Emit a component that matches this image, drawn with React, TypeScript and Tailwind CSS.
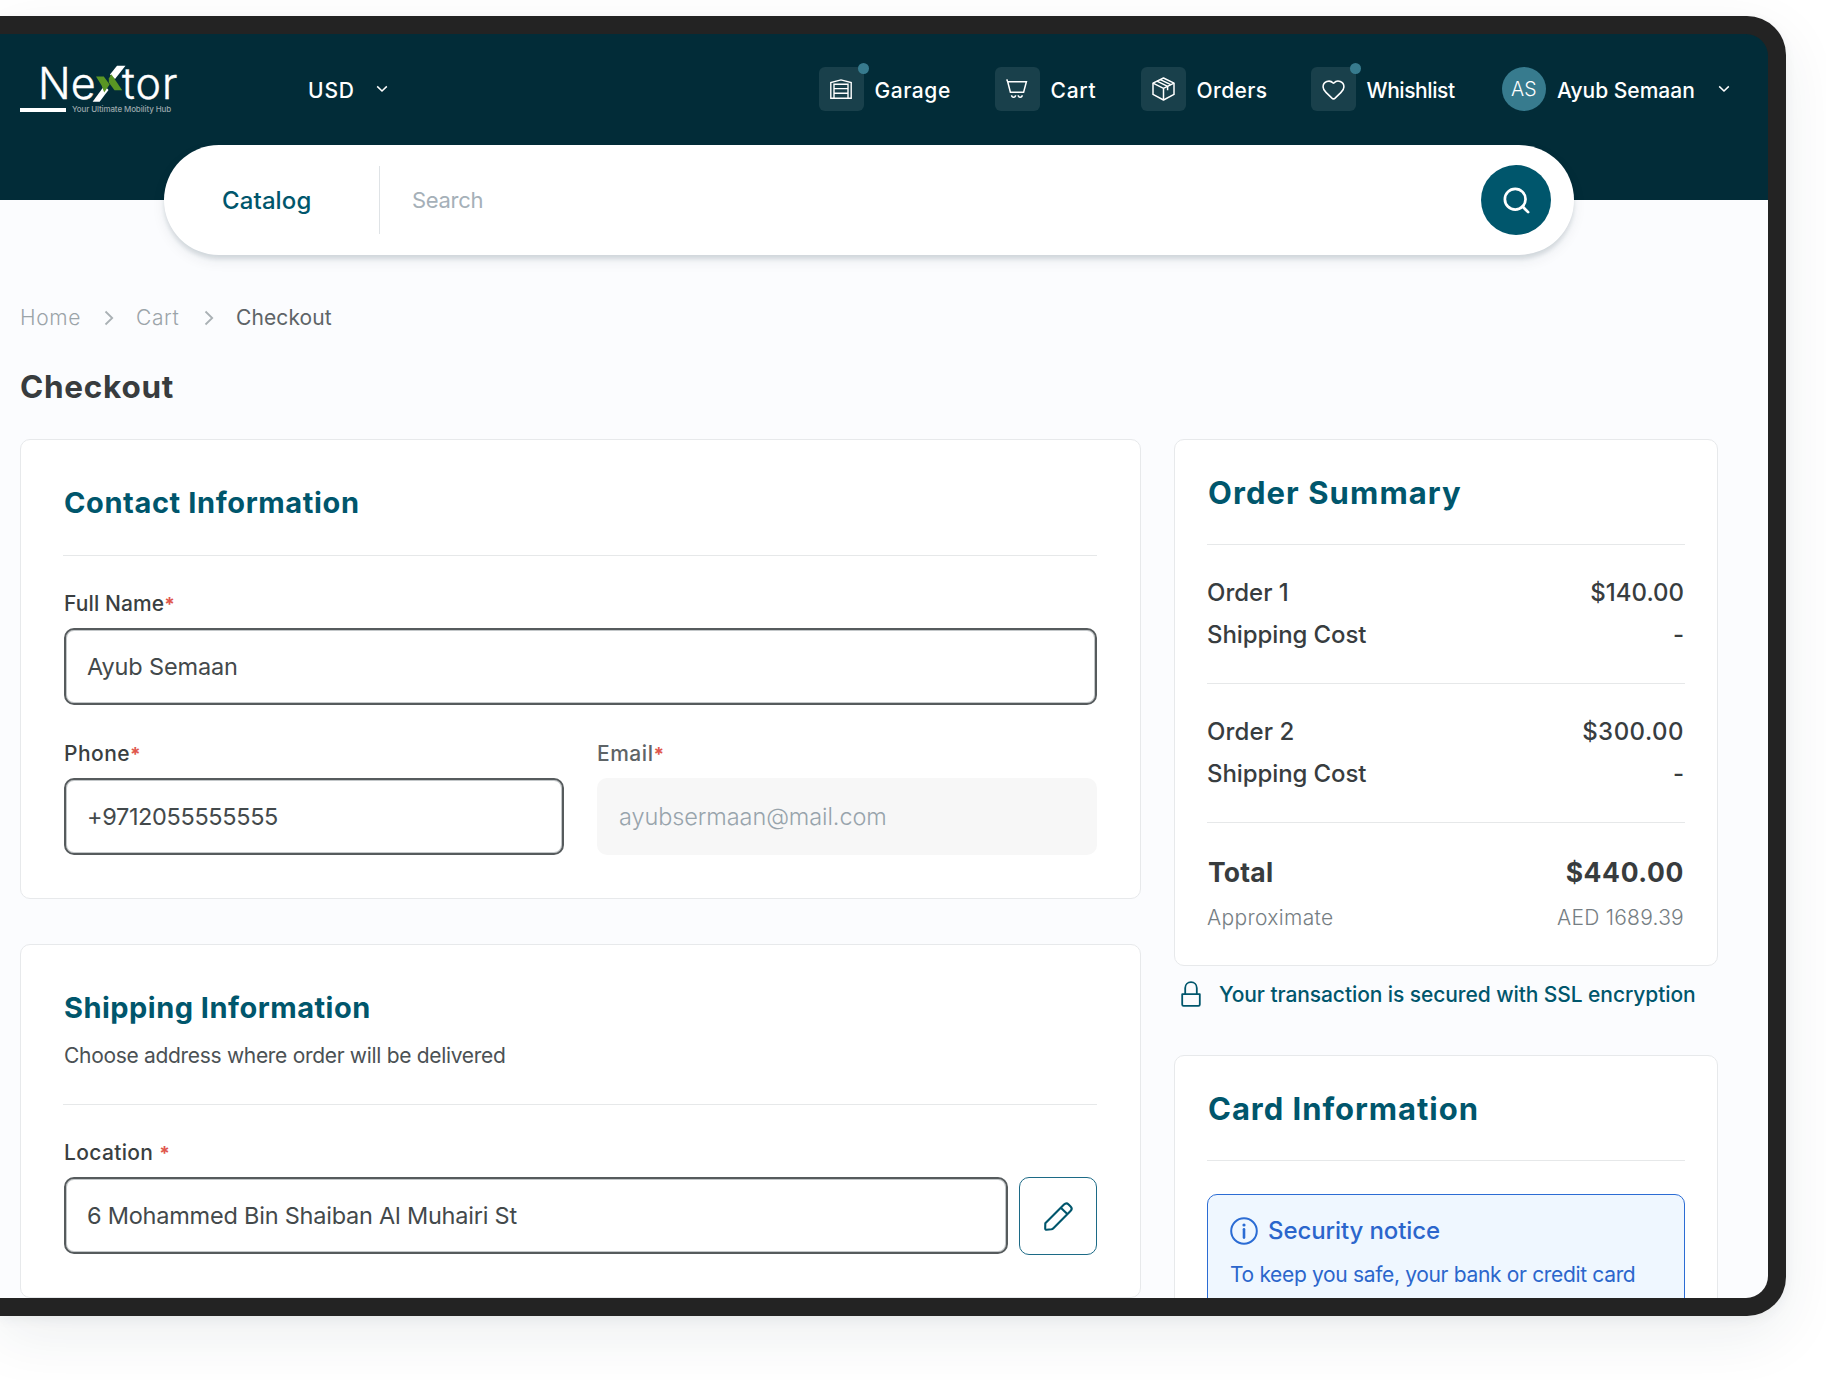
import React from "react";
import { Heart, Search } from "lucide-react";

function Logo() {
  return (
    <div className="relative h-[64px] w-[170px] text-white" role="img" aria-label="Nextor">
      <span className="absolute left-[18px] top-[4px] text-[43px] leading-10 font-light [-webkit-text-stroke:0.4px_white]">Ne</span>
      <span className="absolute left-[102px] top-[4px] text-[43px] leading-10 font-light tracking-[0.024em] [-webkit-text-stroke:0.4px_white]">tor</span>
      <svg className="absolute left-[72px] top-[6px]" width="36" height="38" viewBox="0 0 36 38" aria-hidden="true">
        <path d="M25 0.7H33.5L23 14L18 9.5Z" fill="#fff" />
        <path d="M0.6 36.7H7.6L16.5 25L12.5 20.5Z" fill="#fff" />
        <path d="M4 11.5H11.8L17.6 19.4L12.2 27.4L9.6 20.5Z" fill="#5a9623" />
        <path d="M19.4 9.2L30.2 25.2H22.5L16.8 17.5V13.5Z" fill="#5a9623" />
      </svg>
      <span className="absolute left-0 top-[48.5px] h-[4px] w-[46px] bg-white" />
      <span className="absolute left-[52px] top-[45px] whitespace-nowrap text-[8px] leading-[10px] tracking-[-0.015em] text-[#9aa7ab]">
        Your Ultimate Mobility Hub
      </span>
    </div>
  );
}

function ChevronDown() {
  return (
    <svg width="12" height="8" viewBox="0 0 12 8" fill="none" stroke="white" strokeWidth="1.5" aria-hidden="true">
      <path d="M1.2 1.4L6 6L10.8 1.4" />
    </svg>
  );
}

function GarageIcon() {
  return (
    <svg width="22" height="20" viewBox="0 0 22 20" fill="none" stroke="white" strokeWidth="1.4" aria-hidden="true">
      <path d="M0.8 19.3V3.6L11 0.9L21.2 3.6V19.3H0.8Z" />
      <path d="M4 19.3V5.2H18V19.3M4 9.6H18M4 14.3H18" />
    </svg>
  );
}

function CartIcon() {
  return (
    <svg width="22" height="20" viewBox="0 0 22 20" fill="none" stroke="white" strokeWidth="1.5" aria-hidden="true">
      <path d="M0.7 0.4L1.7 2.7H20.4L17.6 13.2H4.4L1.7 2.7" />
      <path d="M5.6 16.3C5.8 19 9.4 19 9.6 16.3M12.2 16.3C12.4 19 16 19 16.2 16.3" />
    </svg>
  );
}

function OrdersIcon() {
  return (
    <svg width="23" height="24" viewBox="0 0 23 24" fill="none" stroke="white" strokeWidth="1.5" strokeLinejoin="round" aria-hidden="true">
      <path d="M11.5 1L22 6.1V17.4L11.5 23L1 17.4V6.1Z" />
      <path d="M1 6.1L11.5 11.4L22 6.1M11.5 11.4V23" />
      <path d="M5 4.2L15.6 9.4V13.2M8.3 2.6L18.8 7.7" />
    </svg>
  );
}

function NavItem({ icon, label, dot, className }: { icon: React.ReactNode; label: string; dot?: boolean; className: string }) {
  return (
    <a className={`flex shrink-0 items-center ${className}`}>
      <span className="relative flex h-11 w-[44.5px] items-center justify-center rounded-md bg-[#19404b]">
        {icon}
        {dot && <span className="absolute -right-[5.5px] -top-[4.5px] size-[11px] rounded-full bg-[#377b8e]" />}
      </span>
      <span className="pt-[3px] pl-[11px]">{label}</span>
    </a>
  );
}

function Header() {
  return (
    <header className="h-[166px] bg-[#022c38] text-[21px] leading-[30px] font-medium text-white">
      <div className="flex h-[110px] items-center pl-5">
        <div className="flex h-full w-[288px] items-start pt-[25px]">
          <Logo />
        </div>
        <div className="flex w-[511px] items-center">
          <span className="pt-[3px] tracking-[0.04em]">USD</span>
          <span className="ml-[21px]">
            <ChevronDown />
          </span>
        </div>
        <NavItem icon={<GarageIcon />} label="Garage" dot className="w-[176px] tracking-[0.027em]" />
        <NavItem icon={<CartIcon />} label="Cart" className="w-[146px] tracking-[0.035em]" />
        <NavItem icon={<OrdersIcon />} label="Orders" className="w-[170px] tracking-[0.02em]" />
        <NavItem icon={<Heart size={25} strokeWidth={1.5} />} label="Whishlist" dot className="w-[190.5px] tracking-[-0.02em]" />
        <div className="flex items-center">
          <span className="flex h-11 w-[44.5px] items-center justify-center rounded-full bg-[#377b8e] text-[19.5px] font-light">AS</span>
          <span className="pt-[3px] pl-[11px] whitespace-nowrap">Ayub Semaan</span>
          <span className="ml-[23px]">
            <ChevronDown />
          </span>
        </div>
      </div>
    </header>
  );
}

function SearchBar() {
  return (
    <div className="relative -mt-[55px] ml-[164px] flex h-[110px] w-[1410px] items-center rounded-full bg-white shadow-[0_4px_4px_rgba(20,40,60,0.12),0_6px_14px_rgba(20,40,60,0.07)]">
      <span className="w-[215px] pt-px pl-[58px] text-2xl font-medium tracking-[0.005em] text-[#00566c]">Catalog</span>
      <span className="h-[68px] w-px bg-[#dfe3e6]" />
      <span className="flex-1 pl-8 pt-px text-[22px] tracking-[-0.014em] text-[#a5b0b8]">Search</span>
      <button className="mr-[23px] flex size-[70px] items-center justify-center rounded-full bg-[#00566c] text-white">
        <Search size={31} strokeWidth={2.1} />
      </button>
    </div>
  );
}

function Crumb() {
  return (
    <svg width="10" height="16" viewBox="0 0 10 16" fill="none" stroke="#a9b0b4" strokeWidth="1.8" aria-hidden="true">
      <path d="M1.5 1.5L8.2 8L1.5 14.5" />
    </svg>
  );
}

function Card({ className, children }: { className: string; children: React.ReactNode }) {
  return <section className={`rounded-[10px] border border-[#e7e9eb] bg-white ${className}`}>{children}</section>;
}

function Divider({ className }: { className: string }) {
  return <hr className={`h-px border-0 bg-[#e6e8e9] ${className}`} />;
}

function Label({ children, className, tone }: { children: string; className: string; tone?: string }) {
  return (
    <div className={`h-[30px] whitespace-pre text-[21px] leading-[30px] ${className}`}>
      <span className={`font-medium ${tone ?? "text-[#3a3f41]"}`}>{children}</span>
      <span className="text-[19px] leading-none tracking-normal font-bold text-[#e0574d]">*</span>
    </div>
  );
}

function Field({ children, className }: { children: string; className: string }) {
  return (
    <div className={`flex h-[77px] items-center rounded-[10px] border-2 border-[#565b5d] bg-white pl-[21px] text-[23.5px] text-[#43494b] shadow-[inset_0_0_0_1px_#c3c7c9] ${className}`}>
      {children}
    </div>
  );
}

function OrderRows({ name, price, nameClass, priceClass }: { name: string; price: string; nameClass: string; priceClass: string }) {
  return (
    <div className="mt-[27px] text-2xl font-medium leading-[41.5px] text-[#383d3f]">
      <div className="flex justify-between pr-px">
        <span className={nameClass}>{name}</span>
        <span className={priceClass}>{price}</span>
      </div>
      <div className="flex justify-between pr-px">
        <span className="tracking-[-0.004em]">Shipping Cost</span>
        <span>-</span>
      </div>
    </div>
  );
}

function LeftColumn() {
  return (
    <div className="w-[1121px]">
      <Card className="h-[460px] px-[43px] pt-[43px]">
        <h2 className="text-[29px] font-bold leading-10 tracking-[0.021em] text-[#00566c]">Contact Information</h2>
        <Divider className="-ml-px mt-8" />
        <Label className="mt-[33px] tracking-[0.005em]">Full Name</Label>
        <Field className="mt-[9px] tracking-[-0.006em]">Ayub Semaan</Field>
        <div className="mt-[34px] grid grid-cols-2 gap-[33px]">
          <div>
            <Label className="tracking-[0.022em]">Phone</Label>
            <Field className="mt-[9px] tracking-[-0.015em]">+9712055555555</Field>
          </div>
          <div>
            <Label className="tracking-[0.025em]" tone="text-[#5e6467]">Email</Label>
            <div className="mt-[9px] flex h-[77px] items-center rounded-[10px] bg-[#f7f7f7] pl-[22px] text-[23.5px] font-light tracking-[-0.004em] text-[#98a4ac]">
              ayubsermaan@mail.com
            </div>
          </div>
        </div>
      </Card>
      <Card className="mt-[45px] h-[354px] px-[43px] pt-[43px]">
        <h2 className="text-[29px] font-bold leading-10 tracking-[0.0165em] text-[#00566c]">Shipping Information</h2>
        <p className="mt-[13px] text-[21px] leading-[30px] tracking-[-0.0147em] text-[#4b5154]">Choose address where order will be delivered</p>
        <Divider className="-ml-px mt-[33px]" />
        <Label className="mt-[33px] tracking-[0.016em]">{"Location "}</Label>
        <div className="mt-[9px] flex gap-[11px]">
          <Field className="flex-1 tracking-[-0.0095em]">6 Mohammed Bin Shaiban Al Muhairi St</Field>
          <button className="flex size-[78px] items-center justify-center rounded-[10px] border border-[#1c6a86]">
            <svg width="29" height="29" viewBox="0 0 29 29" fill="none" stroke="#00566c" strokeWidth="2.1" strokeLinejoin="round" aria-hidden="true">
              <path d="M1.3 21.2L20 2.5C21.4 1.1 23.3 1.1 24.6 2.4L26.6 4.4C27.9 5.7 27.9 7.6 26.5 9L9.4 26.2C8.8 26.8 8.2 27.2 7.4 27.3L2.6 27.7C1.8 27.8 1.2 27.2 1.2 26.4Z" />
              <path d="M16.8 5.7L23.3 12.1" />
            </svg>
          </button>
        </div>
      </Card>
    </div>
  );
}

function RightColumn() {
  return (
    <div className="w-[544px]">
      <Card className="px-8 pt-[33px] pb-8">
        <h2 className="pl-px text-[31px] font-bold leading-10 tracking-[0.035em] text-[#00566c]">Order Summary</h2>
        <Divider className="mt-[31px]" />
        <OrderRows name="Order 1" price="$140.00" nameClass="" priceClass="" />
        <Divider className="mt-7" />
        <OrderRows name="Order 2" price="$300.00" nameClass="tracking-[0.005em]" priceClass="tracking-[0.02em]" />
        <Divider className="mt-7" />
        <div className="mt-[29px] flex justify-between pr-px text-[26.5px] font-bold leading-10 text-[#383c3e]">
          <span className="pl-px tracking-[0.008em]">Total</span>
          <span className="tracking-[0.023em]">$440.00</span>
        </div>
        <div className="mt-[11px] flex justify-between pr-px text-[21px] font-light leading-[30px] text-[#767e83]">
          <span className="tracking-[0.016em]">Approximate</span>
          <span className="tracking-[0.012em]">AED 1689.39</span>
        </div>
      </Card>
      <div className="mt-[13px] flex h-[30px] items-center pl-[7px] text-[#00566c]">
        <svg width="20" height="26" viewBox="0 0 20 26" fill="none" stroke="#00566c" strokeWidth="1.8" strokeLinejoin="round" aria-hidden="true">
          <path d="M1.2 13.2H18.8V23.5C18.8 24.3 18.3 24.8 17.5 24.8H2.5C1.7 24.8 1.2 24.3 1.2 23.5Z" />
          <path d="M4.2 13.2V7C4.2 3.6 6.7 1.2 10 1.2S15.8 3.6 15.8 7V13.2" />
        </svg>
        <span className="pl-[18px] pt-[2px] whitespace-nowrap text-[21px] font-medium leading-[30px] tracking-[-0.004em]">
          Your transaction is secured with SSL encryption
        </span>
      </div>
      <Card className="mt-[46px] h-[320px] px-8 pt-[33px]">
        <h2 className="pl-px text-[31px] font-bold leading-10 tracking-[0.031em] text-[#00566c]">Card Information</h2>
        <Divider className="mt-[31px]" />
        <div className="mt-[33px] h-[180px] rounded-[10px] border border-[#2b6cd4] bg-[#eff7ff] pt-[21px] pl-[22px] text-[#2b66cc]">
          <div className="flex h-[30px] items-center">
            <svg width="28" height="28" viewBox="0 0 28 28" fill="none" stroke="#2b6cd4" strokeWidth="2" aria-hidden="true">
              <circle cx="14" cy="14" r="12.8" />
              <path d="M14 12.2V20.6" strokeWidth="2.6" strokeLinecap="round" />
              <circle cx="14" cy="8" r="1.6" fill="#2b6cd4" stroke="none" />
            </svg>
            <span className="pl-[10px] text-2xl font-medium tracking-[-0.004em]">Security notice</span>
          </div>
          <p className="mt-[14px] whitespace-nowrap text-[21px] leading-[30px] tracking-[-0.016em]">To keep you safe, your bank or credit card</p>
        </div>
      </Card>
    </div>
  );
}

export default function App() {
  return (
    <div className="h-[1380px] w-full overflow-hidden bg-white pt-4 font-['Inter','Liberation_Sans',sans-serif]">
      <div className="h-[1300px] w-[1786px] rounded-r-[39px] bg-[#232323] py-[18px] pr-[18px] shadow-[0_20px_60px_rgba(30,50,70,0.08),0_4px_12px_rgba(30,50,70,0.05)]">
        <div className="h-full overflow-hidden rounded-r-[22px]">
          <Header />
          <div className="flow-root h-full bg-[#fbfcfe]">
            <SearchBar />
            <nav className="mt-12 flex h-[30px] items-center pl-5 text-[21px] font-light text-[#9ba4a9]">
              <span className="w-[84px] tracking-[0.03em]">Home</span>
              <Crumb />
              <span className="w-[69px] pl-[22px] tracking-[0.03em]">Cart</span>
              <span className="pl-[21px]">
                <Crumb />
              </span>
              <span className="pl-[22px] font-normal tracking-[0.005em] text-[#5e6467]">Checkout</span>
            </nav>
            <h1 className="mt-[34px] pl-5 text-[31.5px] font-bold leading-10 tracking-[0.023em] text-[#383c3e]">Checkout</h1>
            <main className="mt-8 flex gap-[33px] pl-5">
              <LeftColumn />
              <RightColumn />
            </main>
          </div>
        </div>
      </div>
    </div>
  );
}
